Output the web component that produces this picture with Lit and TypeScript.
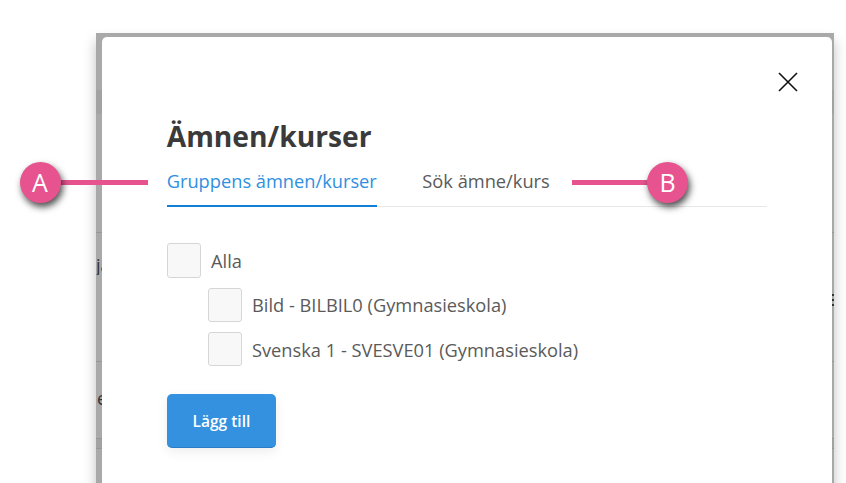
import { LitElement, html, css } from "lit";
import { customElement } from "lit/decorators.js";

const RULES = [199, 328, 405, 415];

@customElement("app-root")
export class AppRoot extends LitElement {
  static styles = css`
    :host {
      display: block;
      position: relative;
      width: 846px;
      height: 483px;
      overflow: hidden;
      background: #fff;
      font-family: "Open Sans", sans-serif;
      color: #5a5a5a;
      padding: 33px 12px 0 96px;
      box-sizing: border-box;
    }
    * { box-sizing: border-box; }
    .backdrop {
      position: relative;
      height: 470px;
      background: #a9a9a9;
      padding: 4px 2px 0 5.6px;
      box-shadow: 0 8px 12px rgba(0, 0, 0, 0.25);
    }
    .rule {
      position: absolute;
      left: 0;
      right: 0;
      height: 1px;
      background: #979797;
    }
    .band {
      position: absolute;
      left: 0;
      right: 0;
      top: 57px;
      height: 24px;
      background: #a2a2a2;
    }
    .band.low { top: 405px; height: 10px; }
    .peek {
      position: absolute;
      left: 0;
      width: 6px;
      overflow: hidden;
      font-size: 18px;
      line-height: 20px;
      color: #333;
    }
    .peek.e { left: 1px; }
    .dots {
      position: absolute;
      right: 0;
      top: 261px;
      width: 3px;
      display: flex;
      flex-direction: column;
      gap: 3px;
    }
    .dots span {
      height: 2px;
      background: #333;
    }
    .modal {
      position: relative;
      height: 100%;
      background: #fff;
      border-radius: 5px 5px 0 0;
      padding: 83px 65px 0 65.1px;
    }
    .close {
      position: absolute;
      top: 35px;
      right: 34px;
      width: 20px;
      height: 20px;
      display: block;
    }
    h1 {
      margin: 0;
      font-size: 28.2px;
      line-height: 33px;
      font-weight: 700;
      color: #3a3a3a;
    }
    .tabs {
      display: flex;
      gap: 45.5px;
      margin-top: 15px;
      border-bottom: 1px solid #e8e8e8;
      font-size: 18.25px;
      line-height: 26px;
    }
    .tab {
      padding-bottom: 10.5px;
      color: #5a5a5a;
    }
    .tab.active {
      color: #2f8fe0;
      border-bottom: 2px solid #0f7fd8;
      margin-bottom: -1px;
    }
    .list {
      margin-top: 37px;
      display: flex;
      flex-direction: column;
      gap: 10.3px;
      font-size: 18.25px;
      color: #5a5a5a;
    }
    .row {
      display: flex;
      align-items: center;
      gap: 10px;
      height: 34px;
    }
    .row.sub { padding-left: 41px; }
    .box {
      width: 34.3px;
      height: 34.3px;
      background: #f8f8f8;
      border: 1px solid #d6d6d6;
      border-radius: 3px;
    }
    .btn {
      display: block;
      margin-top: 28px;
      width: 109.5px;
      height: 54px;
      border: 0;
      border-bottom: 1px solid #2a7cc4;
      border-radius: 5px;
      background: #3391e0;
      color: #fff;
      font: 600 15.5px "Open Sans", sans-serif;
      box-shadow: 0 4px 12px rgba(0, 0, 0, 0.07);
    }
    .line {
      position: absolute;
      height: 4.5px;
      top: 180.2px;
      background: #e7538e;
    }
    .line.a { left: 50px; width: 98px; }
    .line.b { left: 572px; width: 86px; }
    .badge {
      position: absolute;
      top: 162px;
      width: 41px;
      height: 41px;
      border-radius: 50%;
      background: #e7538e;
      color: #fff;
      font-size: 25px;
      font-weight: 500;
      line-height: 41px;
      text-align: center;
      box-shadow: 2px 4px 7px rgba(0, 0, 0, 0.7);
    }
    .badge.a { left: 19.5px; }
    .badge.b { left: 647px; }
  `;

  render() {
    return html`
      <div class="backdrop">
        <div class="band"></div>
        <div class="band low"></div>
        ${RULES.map((y) => html`<div class="rule" style="top:${y}px"></div>`)}
        <div class="peek" style="top:222px">ja</div>
        <div class="peek e" style="top:355px">e</div>
        <div class="dots"><span></span><span></span><span></span></div>
        <div class="modal">
          <svg class="close" viewBox="0 0 20 20" fill="none" stroke="#111" stroke-width="1.6">
            <path d="M1 1L19 19M19 1L1 19"></path>
          </svg>
          <h1>Ämnen/kurser</h1>
          <div class="tabs">
            <div class="tab active">Gruppens ämnen/kurser</div>
            <div class="tab">Sök ämne/kurs</div>
          </div>
          <div class="list">
            <div class="row"><span class="box"></span>Alla</div>
            <div class="row sub"><span class="box"></span>Bild - BILBIL0 (Gymnasieskola)</div>
            <div class="row sub"><span class="box"></span>Svenska 1 - SVESVE01 (Gymnasieskola)</div>
          </div>
          <button class="btn">Lägg till</button>
        </div>
      </div>
      <div class="line a"></div>
      <div class="line b"></div>
      <div class="badge a">A</div>
      <div class="badge b">B</div>
    `;
  }
}
